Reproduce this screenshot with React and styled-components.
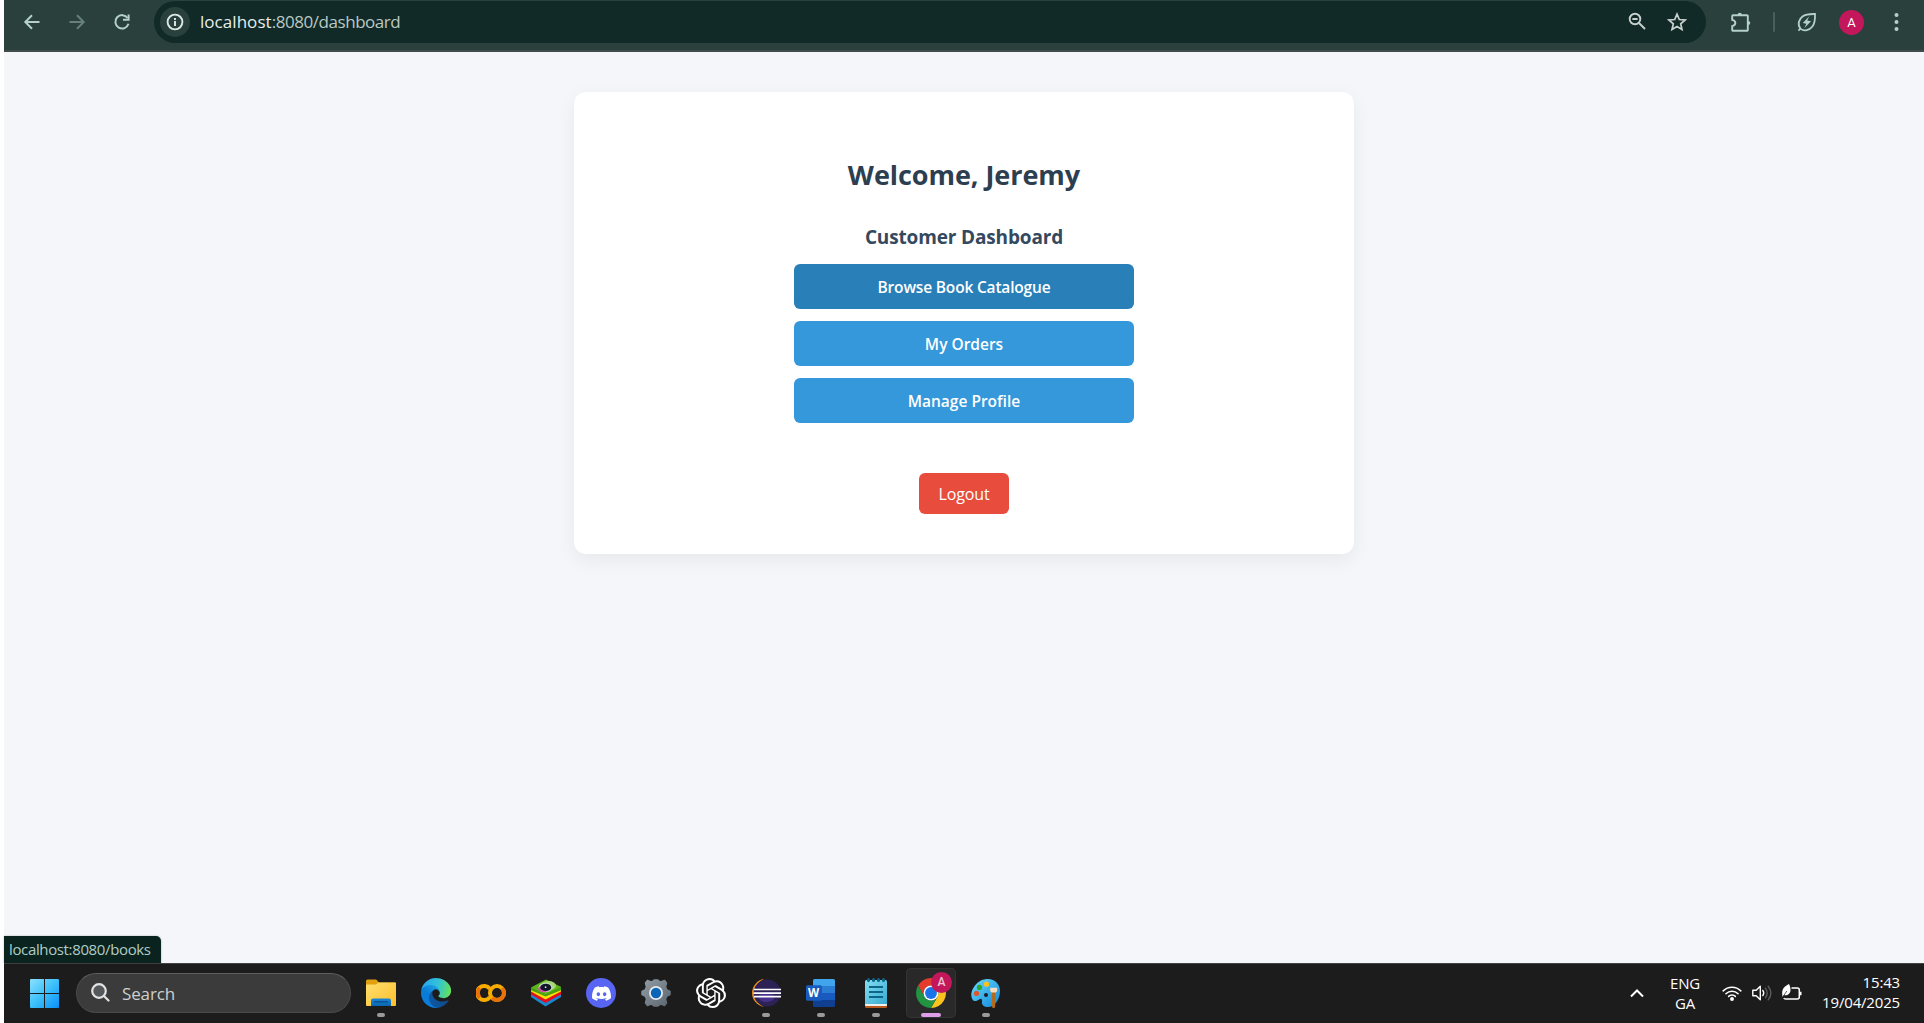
import React from "react";
import styled, { createGlobalStyle } from "styled-components";
import { SiOpenai, SiDiscord } from "react-icons/si";

const GlobalStyle = createGlobalStyle`
  *, *::before, *::after { box-sizing: border-box; }
  body { margin: 0; background: #ffffff; }
`;

const Screen = styled.div`
  display: flex;
  flex-direction: column;
  height: 100vh;
  padding-left: 4px;
  overflow: hidden;
  font-family: "Open Sans", "Noto Sans", sans-serif;
  svg { display: block; flex: none; }
`;

/* ---------- Browser toolbar ---------- */

const Toolbar = styled.header`
  display: flex;
  align-items: center;
  flex: none;
  height: 52px;
  padding: 0 12px 6px 13px;
  background: #29403c;
  border-bottom: 2px solid #414b49;
`;

const ToolButton = styled.button`
  display: flex;
  align-items: center;
  justify-content: center;
  flex: none;
  width: ${(p) => p.$width || 30}px;
  height: 30px;
  margin-right: ${(p) => p.$gap || 0}px;
  padding: 0;
  border: 0;
  background: none;
  color: ${(p) => (p.$dim ? "#66807b" : "#b4d0ca")};
`;

const AddressBar = styled.div`
  display: flex;
  align-items: center;
  flex: 1;
  height: 42px;
  padding: 0 19px 0 6px;
  border-radius: 21px;
  background: #112a27;
`;

const SiteInfo = styled.div`
  display: flex;
  align-items: center;
  justify-content: center;
  width: 30px;
  height: 30px;
  border-radius: 50%;
  background: #29403c;
  color: #dde8e5;
`;

const Url = styled.div`
  flex: 1;
  padding-left: 10px;
  font-size: 17px;
  line-height: 24px;
  letter-spacing: -0.45px;
  color: #b9c8c4;
`;

const UrlHost = styled.span`
  letter-spacing: 0.05px;
  color: #e6eeec;
`;

const AddressActions = styled.div`
  display: flex;
  gap: 21px;
  color: #c8d0ce;
`;

const Divider = styled.span`
  width: 2px;
  height: 20px;
  margin: 0 22px 0 21px;
  border-radius: 1px;
  background: #46605b;
`;

const Avatar = styled.span`
  display: flex;
  align-items: center;
  justify-content: center;
  width: 25px;
  height: 25px;
  margin: 0 30px 0 22px;
  border-radius: 50%;
  background: #c2185b;
  color: #fff;
  font-family: Roboto, sans-serif;
  font-size: 13px;
  font-weight: 400;
`;

const ExtensionSlot = styled.div`
  padding-left: 24px;
  color: #b4d0ca;
`;

/* ---------- Page ---------- */

const Page = styled.main`
  position: relative;
  flex: 1;
  display: flex;
  justify-content: center;
  align-items: flex-start;
  padding: 40px 0 0;
  background: #f4f6fa;
`;

const Card = styled.section`
  display: flex;
  flex-direction: column;
  align-items: center;
  width: 780px;
  height: 462px;
  padding-top: 64px;
  border-radius: 12px;
  background: #fff;
  box-shadow: 0 6px 20px rgba(0, 0, 0, 0.06);
`;

const Title = styled.h1`
  margin: 0 0 29px;
  font-size: 27px;
  font-weight: 700;
  line-height: 38px;
  letter-spacing: -0.05px;
  color: #2c3e50;
`;

const Subtitle = styled.h2`
  margin: 0 0 13px;
  font-size: 19px;
  font-weight: 700;
  line-height: 28px;
  letter-spacing: -0.15px;
  color: #34495e;
`;

const LinkList = styled.nav`
  display: flex;
  flex-direction: column;
  gap: 12px;
  width: 340px;
`;

const LinkButton = styled.a`
  height: 45px;
  border-radius: 6px;
  background: ${(p) => (p.$active ? "#2980b9" : "#3498db")};
  color: #fff;
  font-size: 15.5px;
  font-weight: 600;
  line-height: 47px;
  letter-spacing: ${(p) => p.$tracking || 0}px;
  text-align: center;
`;

const Logout = styled.a`
  width: 90px;
  height: 41px;
  margin-top: 50px;
  border-radius: 6px;
  background: #e74c3c;
  color: #fff;
  font-size: 16px;
  line-height: 43px;
  letter-spacing: -0.1px;
  text-align: center;
`;

const StatusBubble = styled.div`
  position: absolute;
  left: 0;
  bottom: 0;
  width: 157px;
  height: 27px;
  padding-left: 5px;
  border-radius: 0 5px 0 0;
  background: #0a231f;
  box-shadow: 0 0 2px rgba(0, 0, 0, 0.3);
  color: #b0ccc6;
  font-size: 15px;
  line-height: 26px;
  letter-spacing: -0.36px;
  white-space: nowrap;
`;

/* ---------- Taskbar ---------- */

const Taskbar = styled.footer`
  display: flex;
  align-items: center;
  flex: none;
  height: 60px;
  padding: 0 24px 1px 26px;
  border-top: 1px solid #444;
  background: #1c1c1c;
`;

const SearchBox = styled.div`
  display: flex;
  align-items: center;
  gap: 12px;
  width: 275px;
  height: 40px;
  margin: 0 5px 0 17px;
  padding: 0 14px 1px;
  border: 1px solid #4a4a4a;
  border-top-color: #5e5e5e;
  border-radius: 20px;
  background: #3b3b3b;
  color: #cfcfcf;
`;

const SearchLabel = styled.span`
  padding-top: 2px;
  font-size: 17px;
  line-height: 26px;
  letter-spacing: -0.13px;
`;

const AppRow = styled.div`
  display: flex;
  gap: 5px;
`;

const AppTile = styled.div`
  position: relative;
  display: flex;
  align-items: center;
  justify-content: center;
  width: 50px;
  height: 50px;
  border-radius: 5px;
  background: ${(p) => (p.$active ? "#292929" : "transparent")};
  box-shadow: ${(p) => (p.$active ? "inset 0 0 0 1px #343434" : "none")};
`;

const Running = styled.span`
  position: absolute;
  bottom: 1px;
  left: 50%;
  width: ${(p) => (p.$active ? 20 : 8)}px;
  height: 4px;
  border-radius: 2px;
  background: ${(p) => (p.$active ? "#dd9fe6" : "#9a9a9a")};
  transform: translateX(-50%);
`;

const ProfileBadge = styled.span`
  position: absolute;
  top: 4px;
  left: 25px;
  width: 21px;
  height: 21px;
  border-radius: 50%;
  background: #c2185b;
  color: #f0c3d5;
  font-family: Roboto, sans-serif;
  font-size: 12px;
  font-weight: 500;
  line-height: 21px;
  text-align: center;
`;

const DiscordDisc = styled.div`
  display: flex;
  align-items: center;
  justify-content: center;
  width: 30px;
  height: 30px;
  border-radius: 50%;
  background: #5865f2;
  color: #fff;
`;

const Tray = styled.div`
  display: flex;
  align-items: center;
  margin-left: auto;
  color: #fff;
`;

const Language = styled.div`
  width: 50px;
  margin: 0 12px 1px 16px;
  font-size: 15px;
  line-height: 20px;
  letter-spacing: -0.2px;
  text-align: center;
`;

const TrayIcons = styled.div`
  display: flex;
  align-items: center;
  gap: 10px;
`;

const Clock = styled.div`
  width: 98px;
  padding-bottom: 3px;
  font-size: 15px;
  line-height: 20px;
  letter-spacing: -0.17px;
  text-align: right;
`;

/* ---------- Toolbar icons ---------- */

const Line = ({ size = 18, box = 18, w = 1.8, children, h }) => (
  <svg width={size} height={h || size} viewBox={`0 0 ${box} ${h || box}`} fill="none" stroke="currentColor" strokeWidth={w}>
    {children}
  </svg>
);

const BackIcon = () => (
  <Line w={2}><path d="M16.5 9H2.5M9 2.2 2.3 9 9 15.8" /></Line>
);
const ForwardIcon = () => (
  <Line w={2}><path d="M1.5 9h14M9 2.2 15.7 9 9 15.8" /></Line>
);
const ReloadIcon = () => (
  <Line w={2}>
    <path d="M14.6 5A6.7 6.7 0 1 0 15.5 10.8" />
    <path d="M15.6 1.6v5.2h-5.6" />
  </Line>
);
const InfoIcon = () => (
  <Line w={1.9}>
    <circle cx="9" cy="9" r="7.4" />
    <path d="M9 8v5M9 5v1.9" />
  </Line>
);
const ZoomOutIcon = () => (
  <Line w={1.9}>
    <circle cx="7" cy="7" r="5.3" />
    <path d="M11 11l6 6M4.4 7h5.2" />
  </Line>
);
const StarIcon = () => (
  <Line size={20} box={20} w={1.7}>
    <path d="M10 2.2l2.3 5.3 5.8.5-4.4 3.8 1.3 5.7-5-3-5 3 1.3-5.7L1.9 8l5.8-.5z" />
  </Line>
);
const ExtensionIcon = () => (
  <Line size={22} box={22} w={1.9}>
    <path d="M3 4.200h14a.8.8 0 0 1 .8.8v14a.8.8 0 0 1-.8.8H3a.8.8 0 0 1-.8-.8v-3.900c4.200-1 4.200-5.200 0-6.200V5a.8.8 0 0 1 .8-.8z" />
    <path d="M7.700 4a2.100 2.300 0 0 1 4.200 0zM18 9.900a2.300 2.100 0 0 1 0 4.200z" fill="currentColor" stroke="none" />
  </Line>
);
const EnergyIcon = () => (
  <Line size={20} box={20} w={1.8}>
    <path d="M3.400 16.600C.2 12.500 1.800 7.200 5.500 4.500 8.800 2 13.500 1.900 18 2c.2 4.500-.1 9.300-2.600 12.500-2.900 3.700-8.200 5.300-12 2.100zM1.400 18.600l2.200-2.200" />
    <path d="M12.300 4.300 5.800 11l3.600.7-2.200 4.600 6.800-7-3.800-.7z" fill="currentColor" stroke="none" />
  </Line>
);
const MenuIcon = () => (
  <svg width="5" height="20" viewBox="0 0 5 20" fill="currentColor">
    <circle cx="2.500" cy="3" r="2" /><circle cx="2.500" cy="10" r="2" /><circle cx="2.500" cy="17" r="2" />
  </svg>
);

/* ---------- Taskbar icons ---------- */

const StartIcon = () => (
  <svg width="29" height="29" viewBox="0 0 29 29">
    <defs>
      <linearGradient id="win" x1="0" y1="0" x2="29" y2="29" gradientUnits="userSpaceOnUse">
        <stop offset="0" stopColor="#8be0fd" /><stop offset=".5" stopColor="#3cc0fb" /><stop offset="1" stopColor="#0a8ffc" />
      </linearGradient>
    </defs>
    <path fill="url(#win)" d="M1 0h13v14H0V1a1 1 0 0 1 1-1zM15 0h13a1 1 0 0 1 1 1v13H15zM0 15h14v14H1a1 1 0 0 1-1-1zM15 15h14v13a1 1 0 0 1-1 1H15z" />
  </svg>
);

const SearchIcon = () => (
  <svg width="19" height="19" viewBox="0 0 19 19" fill="none" stroke="#e3e3e3" strokeWidth="2.200" strokeLinecap="round">
    <circle cx="8" cy="8" r="6.800" fill="#55585a" /><path d="M13 13l4.500 4.500" />
  </svg>
);

const FolderIcon = () => (
  <svg width="30" height="28" viewBox="0 0 30 28">
    <defs>
      <linearGradient id="fold" x1="0" y1="0" x2="1" y2="1"><stop offset="0" stopColor="#ffdf70" /><stop offset="1" stopColor="#fcbe2b" /></linearGradient>
      <linearGradient id="tray" x1="0" y1="0" x2="0" y2="1"><stop offset="0" stopColor="#1a86d8" /><stop offset="1" stopColor="#0a66ae" /></linearGradient>
    </defs>
    <path d="M0 2a1.500 1.500 0 0 1 1.500-1.500h8a2 2 0 0 1 1.500.7L13 3.500h16a1 1 0 0 1 1 1V10H0z" fill="#e0a010" />
    <path d="M0 6.500a1 1 0 0 1 1-1h9l2.500-2H29a1 1 0 0 1 1 1V26a1 1 0 0 1-1 1H1a1 1 0 0 1-1-1z" fill="url(#fold)" />
    <path d="M5 27v-5.500a2 2 0 0 1 2-2h16a2 2 0 0 1 2 2V27z" fill="url(#tray)" />
    <rect x="8" y="22.300" width="14" height="1.200" rx=".6" fill="#084a86" />
  </svg>
);

const EdgeIcon = () => (
  <svg width="30" height="30" viewBox="0 0 256 256">
    <defs>
      <linearGradient id="eA" x1="60" y1="177" x2="241" y2="177" gradientUnits="userSpaceOnUse"><stop offset="0" stopColor="#0c59a4" /><stop offset="1" stopColor="#114a8b" /></linearGradient>
      <linearGradient id="eB" x1="150" y1="100" x2="40" y2="230" gradientUnits="userSpaceOnUse"><stop offset="0" stopColor="#1b9de2" /><stop offset=".5" stopColor="#0a7bd6" /><stop offset="1" stopColor="#0a7ddb" /></linearGradient>
      <linearGradient id="eC" x1="20" y1="60" x2="250" y2="120" gradientUnits="userSpaceOnUse"><stop offset="0" stopColor="#2ba7ea" /><stop offset=".5" stopColor="#30c3d8" /><stop offset="1" stopColor="#66e05a" /></linearGradient>
    </defs>
    <path fill="url(#eA)" d="M231 190a94 94 0 0 1-11 5 102 102 0 0 1-36 6c-47 0-88-32-88-74a31 31 0 0 1 16-27c-43 2-54 46-54 72 0 74 68 81 82 81 8 0 20-2 27-4l1-1a128 128 0 0 0 67-53 4 4 0 0 0-4-5z" />
    <path fill="url(#eB)" d="M105 241a79 79 0 0 1-22-21 81 81 0 0 1 29-120c3-1 8-4 15-4a32 32 0 0 1 25 13 32 32 0 0 1 7 19c0-1 24-80-80-80-43 0-79 41-79 78a130 130 0 0 0 12 56 128 128 0 0 0 156 67 75 75 0 0 1-63-8z" />
    <path fill="url(#eC)" d="M152 149c-1 1-3 3-3 6 0 3 2 6 5 8 15 10 42 9 42 9a61 61 0 0 0 31-9 62 62 0 0 0 30-53c0-23-8-38-11-44C224 26 176 0 128 0A128 128 0 0 0 0 126c0-37 37-66 80-66 4 0 24 0 43 10 16 9 25 19 31 30 6 11 7 24 7 30 0 5-3 13-9 19z" />
  </svg>
);

const ColabIcon = () => (
  <svg width="30" height="20" viewBox="0 0 30 20" fill="none" strokeWidth="4">
    <path d="M13.800 5.800A7 7 0 1 0 13.800 14.200" stroke="#f9ab00" />
    <path d="M3.800 14.600A7 7 0 0 1 3.800 5" stroke="#e8710a" />
    <circle cx="21" cy="10" r="7" stroke="#f9ab00" />
    <path d="M25.950 5.050a7 7 0 0 1-9.900 9.900" stroke="#e8710a" />
  </svg>
);

const StackIcon = () => (
  <svg width="30" height="28" viewBox="0 0 30 28">
    <path d="M0 18l14.500 9.500L30 18v-3.500L14.500 22 0 14.500z" fill="#1689d0" />
    <path d="M0 15.500 14.500 24 30 15.500V12L14.500 20 0 12z" fill="#e30f20" />
    <path d="M0 12.500 14.500 20.500 30 12.500V9L14.500 17 0 9z" fill="#fde100" />
    <path d="M0 8.800v2.400L14.500 17.500 30 11.200V8L15 1z" fill="#4a9e12" />
    <path d="M0 8.500 15 .5 30 8 14.500 15.500z" fill="#5db51c" />
    <ellipse cx="17.500" cy="6.800" rx="7.500" ry="4.700" fill="#a8d672" />
    <ellipse cx="14.500" cy="8.600" rx="7" ry="4.600" fill="#c9dfd4" />
    <ellipse cx="12.600" cy="9.800" rx="5.300" ry="3.400" fill="#e04fb0" />
    <ellipse cx="14.800" cy="8.400" rx="5.500" ry="3.700" fill="#111827" />
    <circle cx="14.600" cy="8.200" r=".9" fill="#cdd6ea" />
  </svg>
);

const SettingsIcon = () => (
  <svg width="30" height="28" viewBox="0 0 30 28">
    <defs>
      <linearGradient id="gear" x1="0" y1="0" x2="1" y2="1"><stop offset="0" stopColor="#929ca5" /><stop offset="1" stopColor="#5c666f" /></linearGradient>
    </defs>
    <path fill="url(#gear)" stroke="url(#gear)" strokeWidth="1.500" strokeLinejoin="round" d="M6.500 1.500 10 3l2.500-1L13 1h4l.5 1L20 3l3.500-1.500 2 2.500-1 4 1.500 3 3 1.500v3L26 17l-1.500 3 1 4-2 2.500L20 25l-2 1-1 1h-4l-1-1-2-1-3.500 1.500-2-2.500 1-4L4 17l-3-1.500v-3L4 11l1.500-3-1-4z" />
    <circle cx="15" cy="14" r="7" fill="#e8ebee" />
    <circle cx="15" cy="14" r="5.200" fill="#0a64b8" />
  </svg>
);

const EclipseIcon = () => (
  <svg width="30" height="28" viewBox="0 0 30 28">
    <path d="M13.500 0A14.100 14.100 0 0 0 13.500 28C6 25 3.500 19 3.500 14S6 3 13.500 0z" fill="#f7941e" />
    <circle cx="16.200" cy="14" r="13.600" fill="#2c2255" />
    <ellipse cx="15.500" cy="18" rx="8" ry="5" fill="#47318a" />
    <path d="M3 9.700h27v1.600H3zM2.500 13.200H30v1.700H2.500zM3 16.800h27v1.600H3z" fill="#fff" />
  </svg>
);

const WordIcon = () => (
  <svg width="30" height="28" viewBox="0 0 30 28">
    <path d="M7 1.500A1.500 1.500 0 0 1 8.500 0h19A1.500 1.500 0 0 1 29 1.500V7H7z" fill="#41a5ee" />
    <path d="M7 7h22v7H7z" fill="#2b7cd3" />
    <path d="M7 14h22v7H7z" fill="#185abd" />
    <path d="M7 21h22v5.500a1.500 1.500 0 0 1-1.500 1.500h-19A1.500 1.500 0 0 1 7 26.500z" fill="#103f91" />
    <rect x="0" y="6.300" width="16" height="15.400" rx="1.500" fill="#185abd" />
    <text x="7.600" y="18" textAnchor="middle" fontFamily="Open Sans, sans-serif" fontWeight="700" fontSize="11.500" fill="#fff">W</text>
  </svg>
);

const NotepadIcon = () => (
  <svg width="22" height="30" viewBox="0 0 22 30">
    <defs>
      <linearGradient id="pad" x1="0" y1="0" x2="1" y2="1"><stop offset="0" stopColor="#86def2" /><stop offset="1" stopColor="#35abd0" /></linearGradient>
    </defs>
    <rect y="20" width="22" height="10" rx="1.300" fill="#b8591d" />
    <rect y="20" width="22" height="8" rx="1" fill="#eef0ef" />
    <path d="M0 3.500A1.500 1.500 0 0 1 1.500 2h19A1.500 1.500 0 0 1 22 3.500V26H0z" fill="url(#pad)" />
    <path d="M4 9h14M4 14h14M4 19h14" stroke="#0b6689" strokeWidth="2" />
    <g fill="#0b6689"><rect x="2" y="0" width="3" height="4" rx="1.500" /><rect x="7" y="0" width="3" height="4" rx="1.500" /><rect x="12" y="0" width="3" height="4" rx="1.500" /><rect x="17" y="0" width="3" height="4" rx="1.500" /></g>
  </svg>
);

const ChromeIcon = () => (
  <svg width="30" height="30" viewBox="0 0 48 48">
    <path d="M24 12h20.780A24 24 0 0 0 3.220 12l10.390 18A12 12 0 0 1 24 12z" fill="#e33b2e" />
    <path d="M34.390 30 24 48A24 24 0 0 0 44.780 12H24a12 12 0 0 1 10.390 18z" fill="#fcc31e" />
    <path d="M13.610 30 3.220 12A24 24 0 0 0 24 48l10.390-18a12 12 0 0 1-20.780 0z" fill="#229342" />
    <circle cx="24" cy="24" r="12" fill="#fff" />
    <circle cx="24" cy="24" r="9.500" fill="#1a73e8" />
  </svg>
);

const PaintIcon = () => (
  <svg width="30" height="30" viewBox="0 0 30 30">
    <defs>
      <linearGradient id="pal" x1="0" y1="0" x2="1" y2="1"><stop offset="0" stopColor="#67dcfb" /><stop offset="1" stopColor="#0f86dc" /></linearGradient>
    </defs>
    <path d="M17 1c7 0 12 5 12 12 0 8-5 16-12 16-4.500 0-6.500-2.500-6-5 .4-2.800-1-4-2.800-2.500-2 1.500-5 2.500-6.700 0C-1 17 .5 12 4 7.500 7.500 3 12 1 17 1zM15 15a2 2 0 1 0 0 4 2 2 0 0 0 0-4z" fillRule="evenodd" fill="url(#pal)" />
    <circle cx="5.500" cy="15.400" r="2.600" fill="#e0562a" /><circle cx="8.500" cy="9.400" r="2.600" fill="#2ea52c" /><circle cx="15.500" cy="6.200" r="2.600" fill="#fcc21b" />
    <path d="M21 14h3.200v14.400a1.600 1.600 0 0 1-3.200 0z" fill="#b26a1c" />
    <path d="M19.200 9.800h6.900v2.700c0 1.400-1.400 2-2 2h-2.900c-.5 0-2-.6-2-2z" fill="#f3dcc0" />
  </svg>
);

const ChevronUpIcon = () => (
  <Line size={14} box={14} h={10} w={2}><path d="M1 8.500 7 2.500l6 6" /></Line>
);

const WifiIcon = () => (
  <svg width="20" height="16" viewBox="0 0 20 16" fill="none" stroke="#fff" strokeWidth="1.500" strokeLinecap="round">
    <path d="M1.200 5.900a12.400 12.400 0 0 1 17.600 0M3.900 8.700a8.600 8.600 0 0 1 12.200 0M6.600 11.400a4.800 4.800 0 0 1 6.800 0" />
    <circle cx="10" cy="14" r="1.200" fill="#fff" />
  </svg>
);

const VolumeIcon = () => (
  <svg width="20" height="18" viewBox="0 0 20 18" fill="none" stroke="#fff" strokeWidth="1.400" strokeLinecap="round" strokeLinejoin="round">
    <path d="M.8 6.200h3.400L8.300 2.200v13.600l-4.100-4H.8z" />
    <path d="M10.800 6.400q1.900 2.600 0 5.200" />
    <path d="M13.400 4.200q3.600 4.800 0 9.600M16.200 2.200q5.400 6.800 0 13.600" stroke="#5c5c5c" />
  </svg>
);

const BatteryIcon = () => (
  <svg width="20" height="18" viewBox="0 0 20 18" fill="none" stroke="#fff" strokeWidth="1.500">
    <path d="M9.500 4h5.800a2 2 0 0 1 2 2v7a2 2 0 0 1-2 2H3.500a2 2 0 0 1-1.700-1" />
    <path d="M18 7.800h1.500v3.400H18z" fill="#fff" stroke="none" />
    <path d="M7 0C8.500 3 10 8.500 5.800 10.700 4.300 11.500 2.800 11.300 2 11L.5 12.800C-.5 7 .5 3 7 0z" fill="#fff" stroke="none" />
    <path d="M1.500 12 4.800 7" stroke="#1c1c1c" strokeWidth=".7" />
  </svg>
);

const APPS = [
  { id: "explorer", icon: <FolderIcon />, running: true },
  { id: "edge", icon: <EdgeIcon /> },
  { id: "colab", icon: <ColabIcon /> },
  { id: "bluestacks", icon: <StackIcon /> },
  { id: "discord", icon: <DiscordDisc><SiDiscord size={19} /></DiscordDisc> },
  { id: "settings", icon: <SettingsIcon /> },
  { id: "openai", icon: <SiOpenai size={30} color="#fff" /> },
  { id: "eclipse", icon: <EclipseIcon />, running: true },
  { id: "word", icon: <WordIcon />, running: true },
  { id: "notepad", icon: <NotepadIcon />, running: true },
  { id: "chrome", icon: <ChromeIcon />, running: true, active: true },
  { id: "paint", icon: <PaintIcon />, running: true },
];

export default function App() {
  return (
    <Screen>
      <GlobalStyle />
      <Toolbar>
        <ToolButton $gap={15}><BackIcon /></ToolButton>
        <ToolButton $gap={15} $dim><ForwardIcon /></ToolButton>
        <ToolButton $gap={17}><ReloadIcon /></ToolButton>
        <AddressBar>
          <SiteInfo><InfoIcon /></SiteInfo>
          <Url><UrlHost>localhost</UrlHost>:8080/dashboard</Url>
          <AddressActions><ZoomOutIcon /><StarIcon /></AddressActions>
        </AddressBar>
        <ExtensionSlot><ExtensionIcon /></ExtensionSlot>
        <Divider />
        <ToolButton $width={20}><EnergyIcon /></ToolButton>
        <Avatar>A</Avatar>
        <ToolButton $width={5} $gap={13}><MenuIcon /></ToolButton>
      </Toolbar>
      <Page>
        <Card>
          <Title>Welcome, Jeremy</Title>
          <Subtitle>Customer Dashboard</Subtitle>
          <LinkList>
            <LinkButton $active $tracking={-0.18}>Browse Book Catalogue</LinkButton>
            <LinkButton>My Orders</LinkButton>
            <LinkButton>Manage Profile</LinkButton>
          </LinkList>
          <Logout>Logout</Logout>
        </Card>
        <StatusBubble>localhost:8080/books</StatusBubble>
      </Page>
      <Taskbar>
        <StartIcon />
        <SearchBox><SearchIcon /><SearchLabel>Search</SearchLabel></SearchBox>
        <AppRow>
          {APPS.map((app) => (
            <AppTile key={app.id} $active={app.active}>
              {app.icon}
              {app.active && <ProfileBadge>A</ProfileBadge>}
              {app.running && <Running $active={app.active} />}
            </AppTile>
          ))}
        </AppRow>
        <Tray>
          <ChevronUpIcon />
          <Language>ENG<br />GA</Language>
          <TrayIcons><WifiIcon /><VolumeIcon /><BatteryIcon /></TrayIcons>
          <Clock>15:43<br />19/04/2025</Clock>
        </Tray>
      </Taskbar>
    </Screen>
  );
}
